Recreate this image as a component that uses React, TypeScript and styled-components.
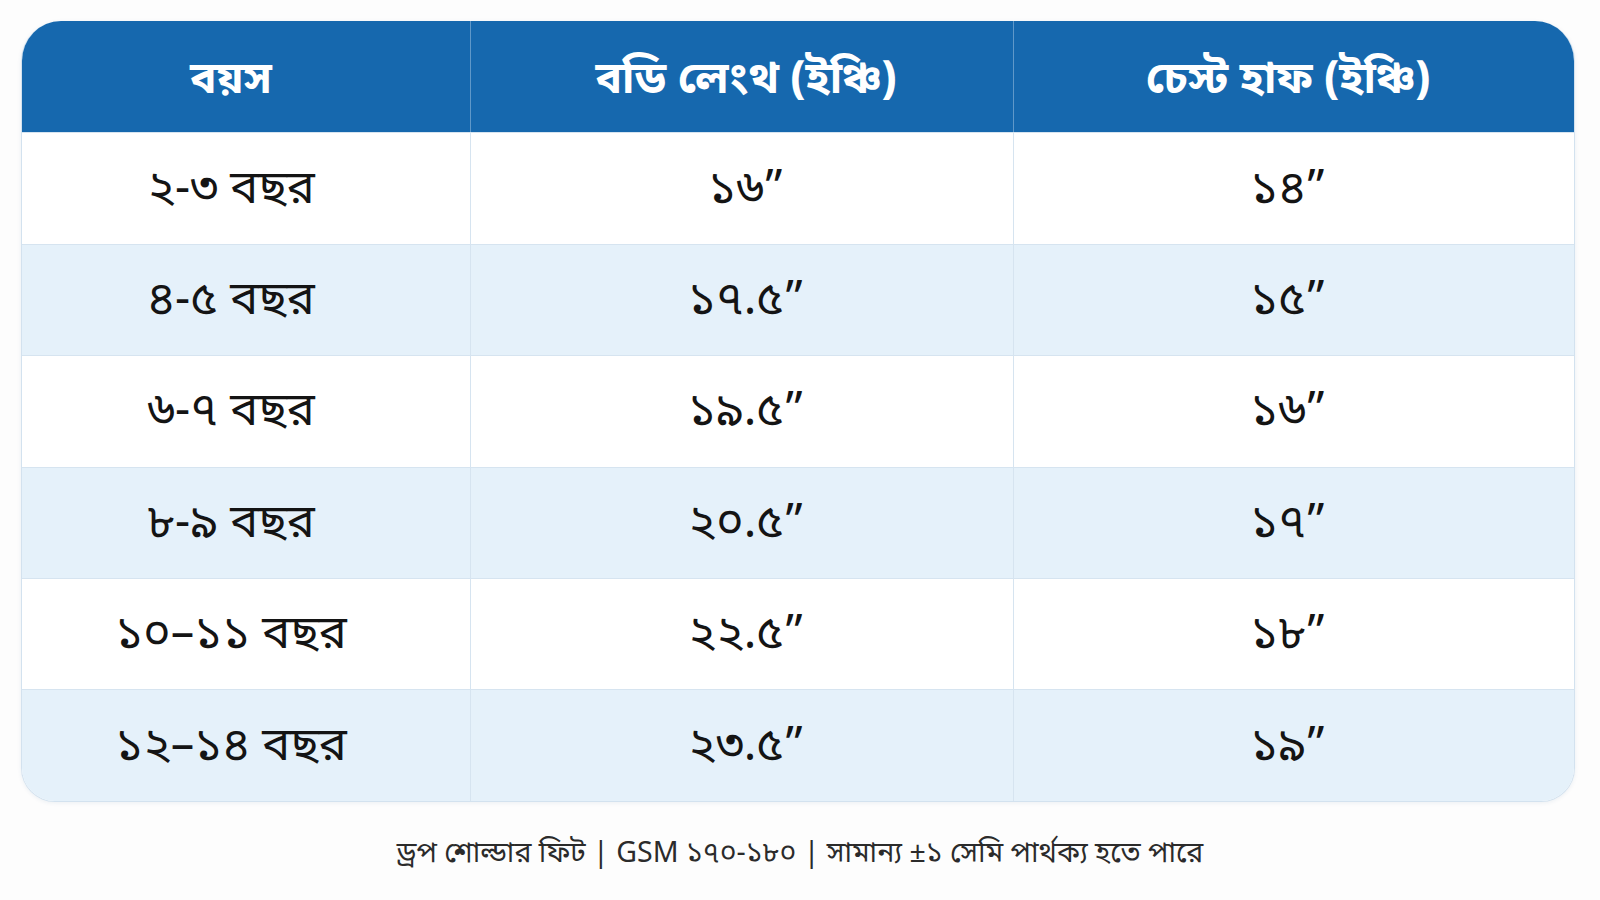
import React from "react";
import styled, { createGlobalStyle } from "styled-components";

const GlobalStyle = createGlobalStyle`
  html, body { margin: 0; padding: 0; background: #fdfdfd; }
  body { font-family: "Noto Sans Bengali", "Noto Sans", "Lohit Bengali", "FreeSans", sans-serif; }
`;

const Page = styled.div`
  width: 1600px;
  height: 900px;
  box-sizing: border-box;
  padding: 21px 25px 0 21px;
  display: flex;
  flex-direction: column;
  align-items: stretch;
`;

const Table = styled.div`
  display: grid;
  grid-template-columns: 449px 543px 1fr;
  grid-auto-rows: 111.4px;
  border: 1px solid #d3e2ef;
  border-top: none;
  border-radius: 40px 40px 34px 34px;
  overflow: hidden;
  background: #ffffff;
  box-shadow: 0 1px 4px rgba(30, 80, 130, 0.08);
`;

const shifts = ["0 30px 0 0", "0 0 0 8px", "0 12px 0 0"];

const HeadCell = styled.div<{ $col: number }>`
  background: #1668ae;
  color: #ffffff;
  font-weight: 700;
  font-size: 44px;
  display: flex;
  align-items: center;
  justify-content: center;
  padding: ${(p) => shifts[p.$col]};
  padding-top: 10px;
  border-right: ${(p) => (p.$col === 2 ? "none" : "1px solid #5f98c9")};
`;

const Cell = styled.div<{ $alt?: boolean; $col: number }>`
  background: ${(p) => (p.$alt ? "#e5f1fa" : "#ffffff")};
  color: #141414;
  font-size: 47px;
  font-weight: 400;
  display: flex;
  align-items: center;
  justify-content: center;
  padding: ${(p) => shifts[p.$col]};
  padding-top: 4px;
  border-right: ${(p) => (p.$col === 2 ? "none" : "1px solid #d6e4f0")};
  border-top: 1px solid #d6e4f0;
`;

const Footer = styled.div`
  margin-top: 30px;
  text-align: center;
  color: #2b2b2b;
  font-size: 28.5px;
  padding-left: 4px;
`;

const headers = ["বয়স", "বডি লেংথ (ইঞ্চি)", "চেস্ট হাফ (ইঞ্চি)"];
const rows = [
  ["২-৩ বছর", "১৬”", "১৪”"],
  ["৪-৫ বছর", "১৭.৫”", "১৫”"],
  ["৬-৭ বছর", "১৯.৫”", "১৬”"],
  ["৮-৯ বছর", "২০.৫”", "১৭”"],
  ["১০–১১ বছর", "২২.৫”", "১৮”"],
  ["১২–১৪ বছর", "২৩.৫”", "১৯”"],
];

export default function App() {
  return (
    <>
      <GlobalStyle />
      <Page>
        <Table>
          {headers.map((h, i) => (
            <HeadCell key={h} $col={i}>
              {h}
            </HeadCell>
          ))}
          {rows.map((r, ri) =>
            r.map((c, ci) => (
              <Cell key={`${ri}-${ci}`} $alt={ri % 2 === 1} $col={ci}>
                {c}
              </Cell>
            ))
          )}
        </Table>
        <Footer>ড্রপ শোল্ডার ফিট | GSM ১৭০-১৮০ | সামান্য ±১ সেমি পার্থক্য হতে পারে</Footer>
      </Page>
    </>
  );
}
